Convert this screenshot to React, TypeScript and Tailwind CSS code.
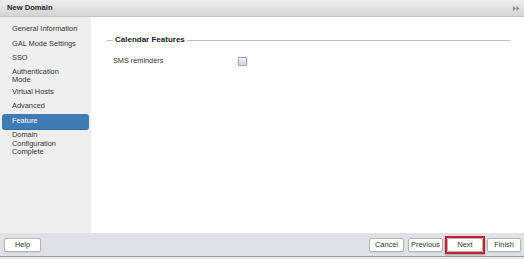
import React from 'react';

const steps = [
  { label: 'General Information', pad: 'py-[2.85px]' },
  { label: 'GAL Mode Settings', pad: 'py-[2.85px]' },
  { label: 'SSO', pad: 'py-[2.85px]' },
  { label: 'Authentication\nMode', pad: 'pt-[2px] pb-0' },
  { label: 'Virtual Hosts', pad: 'py-[2.85px]' },
  { label: 'Advanced', pad: 'py-[2.85px]' },
  { label: 'Feature', pad: 'py-[3px]', active: true },
  { label: 'Domain\nConfiguration\nComplete', pad: 'pt-[1.5px] pb-0' },
];

const Btn: React.FC<{ label: string; w: string }> = ({ label, w }) => (
  <button className={`${w} h-[14px] bg-white border border-[#b4b4b4] rounded-[2px] text-[7.4px] text-[#333] leading-none shadow-[0_1px_1px_rgba(0,0,0,0.08)]`}>
    {label}
  </button>
);

const App: React.FC = () => {
  return (
    <div className="w-[524px] h-[259px] flex flex-col bg-white overflow-hidden" style={{ fontFamily: '"Liberation Sans", Arial, sans-serif' }}>
      {/* title bar */}
      <div className="h-[17px] shrink-0 flex items-center justify-between pl-[7px] pr-[4px] bg-gradient-to-b from-[#efefef] to-[#d4d4d4] border-b border-[#c2c2c2]">
        <span className="text-[7.6px] font-bold text-[#2a2a2a]">New Domain</span>
        <svg width="7" height="5" viewBox="0 0 7 5" className="mt-[1px]">
          <path d="M0 0 L3 2.5 L0 5 Z" fill="#8c8c8c" />
          <path d="M3.5 0 L6.5 2.5 L3.5 5 Z" fill="#8c8c8c" />
        </svg>
      </div>

      <div className="flex flex-1 min-h-0">
        {/* steps */}
        <div className="w-[91px] shrink-0 bg-[#efefef] pt-[5.5px]">
          {steps.map((s, i) => (
            <div
              key={i}
              className={`mx-[2px] px-[10px] whitespace-pre-line text-[7.4px] leading-[8.7px] ${s.pad} ${
                s.active ? 'bg-[#3f7bb5] text-white rounded-[3px] border-b border-[#356a9e]' : 'text-[#333]'
              }`}
            >
              {s.label}
            </div>
          ))}
        </div>

        {/* content */}
        <div className="flex-1 pt-[18px] pl-[16px] pr-[14px]">
          <div className="flex items-center h-[10px]">
            <div className="w-[6px] border-t border-[#bdbdbd]" />
            <span className="px-[2px] text-[8px] font-bold text-[#222] leading-none">Calendar Features</span>
            <div className="flex-1 border-t border-[#bdbdbd]" />
          </div>
          <div className="flex items-center ml-[6px] mt-[11px] h-[10px]">
            <span className="w-[125px] text-[7.3px] text-[#333] leading-none">SMS reminders</span>
            <span className="w-[9px] h-[9px] rounded-[1px] border border-[#86a9e4] bg-gradient-to-b from-[#f2f2f2] to-[#d4d4d4] shadow-[0_0_1px_#a9c4f0]" />
          </div>
        </div>
      </div>

      {/* footer */}
      <div className="h-[23px] shrink-0 flex items-center justify-between pl-[4px] pr-[3px] bg-[#dee1e6]">
        <Btn label="Help" w="w-[37px]" />
        <div className="flex items-center gap-[4px]">
          <Btn label="Cancel" w="w-[35px]" />
          <Btn label="Previous" w="w-[35px]" />
          <div className="relative flex">
            <Btn label="Next" w="w-[36px]" />
            <div className="absolute -inset-[2px] border-2 border-[#c8202f] shadow-[0_1px_2px_rgba(0,0,0,0.35)] pointer-events-none" />
          </div>
          <Btn label="Finish" w="w-[34px]" />
        </div>
      </div>
      <div className="h-[1px] shrink-0 bg-[#9c9c9c]" />
      <div className="h-[2px] shrink-0 bg-[#e9e9e9]" />
    </div>
  );
};

export default App;
